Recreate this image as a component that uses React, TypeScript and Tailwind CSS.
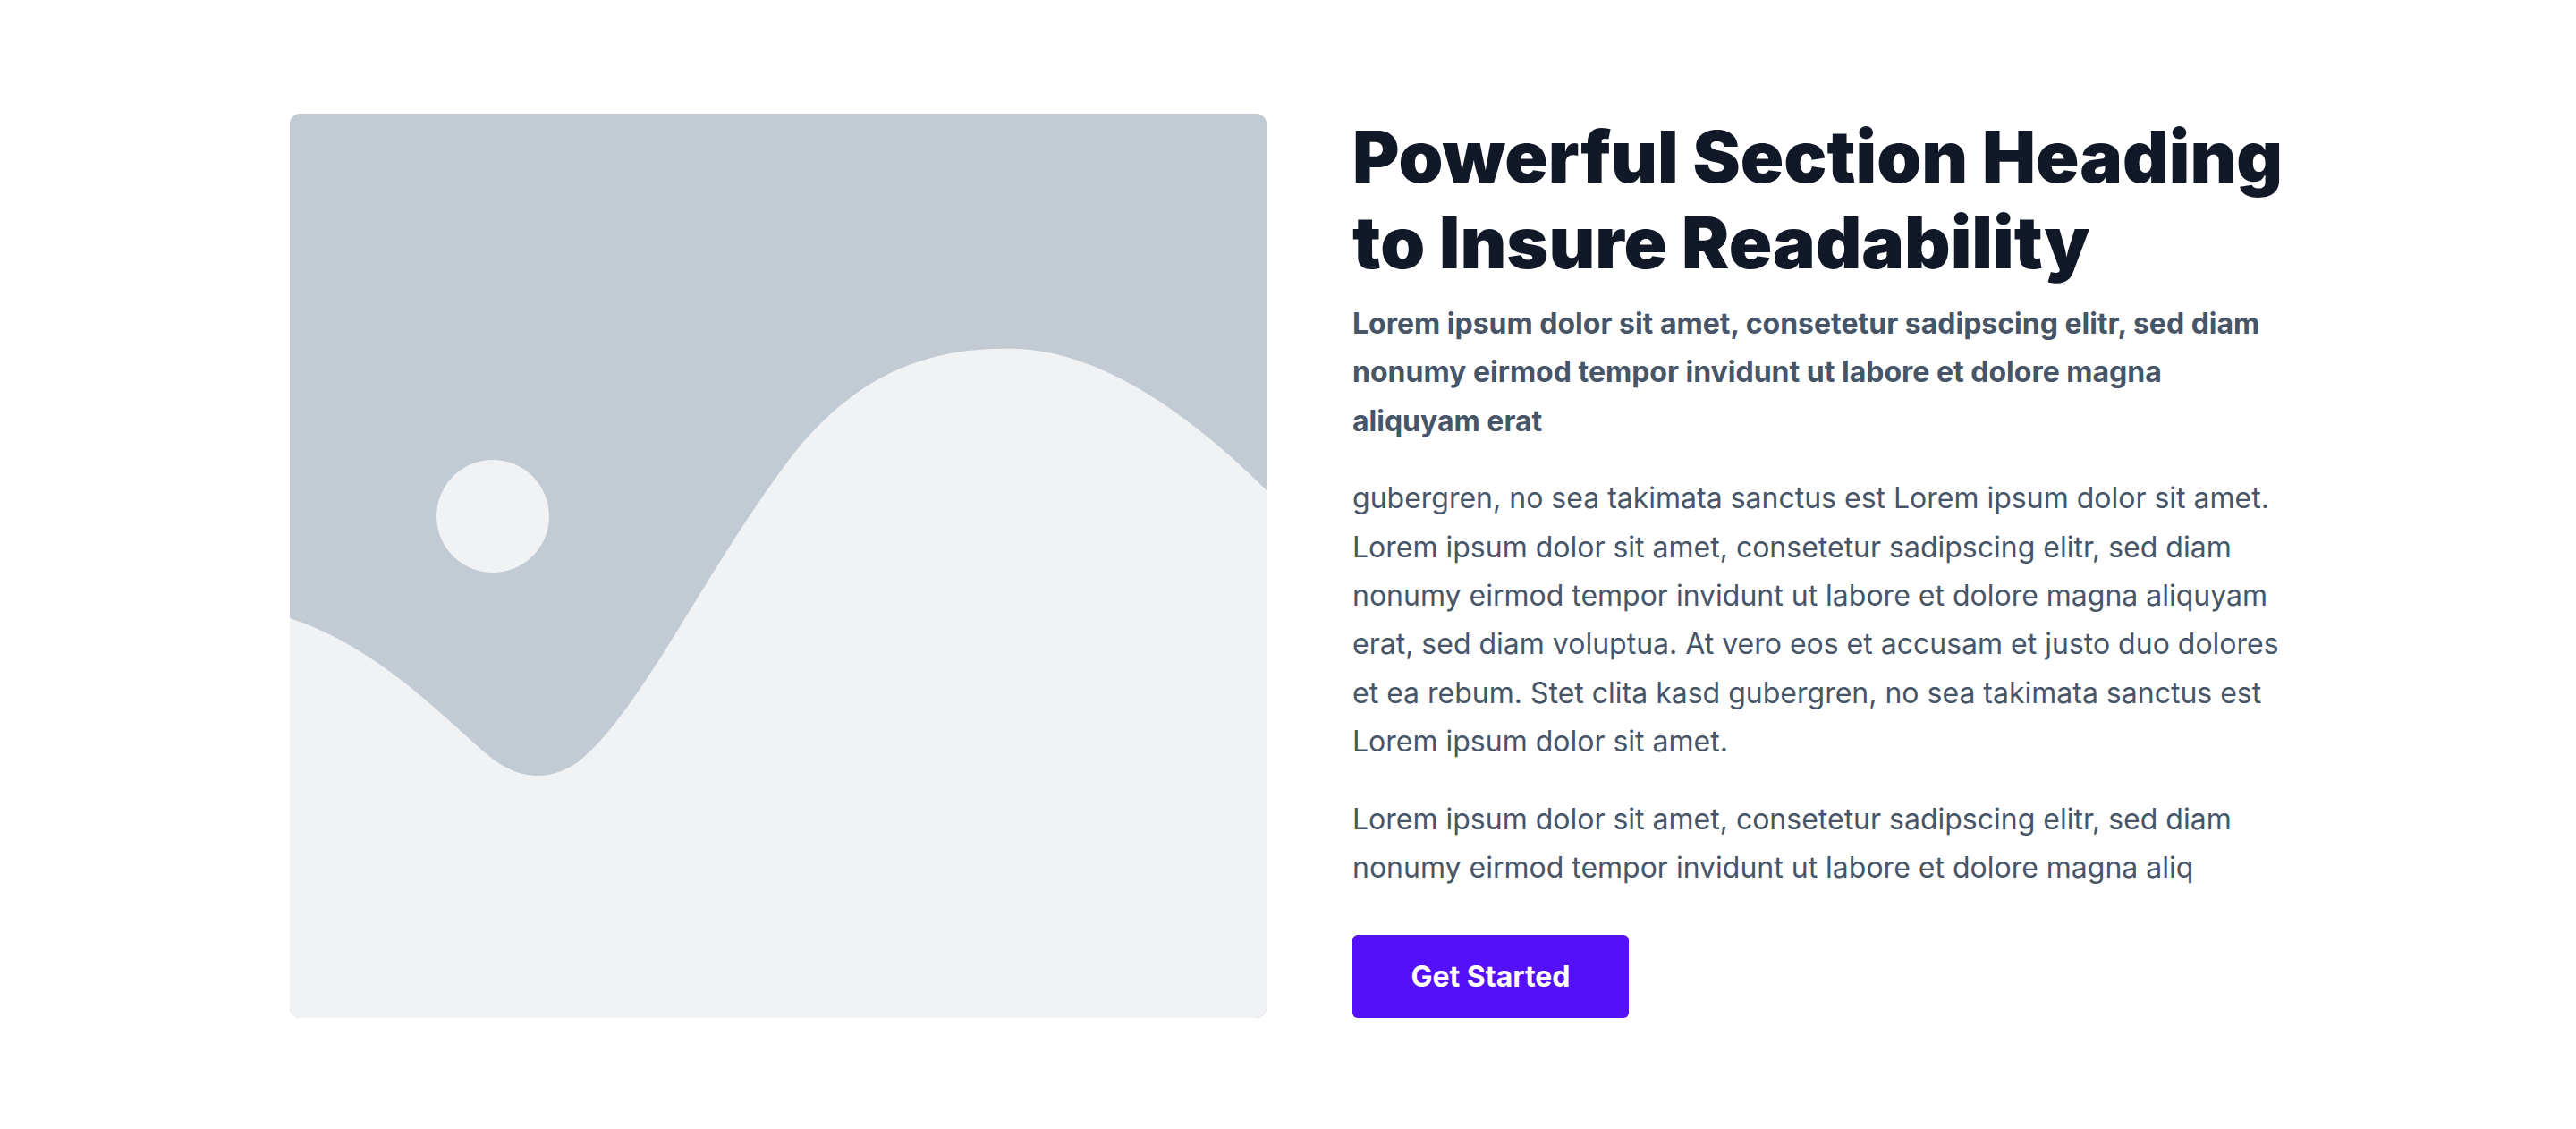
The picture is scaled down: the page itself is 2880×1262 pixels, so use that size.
import React from "react";

function Placeholder() {
  return (
    <div className="w-[1092px] h-[1011px] shrink-0 rounded-[12px] overflow-hidden bg-[#c2cad3]">
      <svg viewBox="0 0 1092 1011" width="1092" height="1011" className="block">
        <rect x="0" y="0" width="1092" height="1011" fill="#c2cad3" />
        <circle cx="227" cy="450" r="63" fill="#f0f2f4" />
        <path
          d="M0,564 C110,600 190,695 232,725 C262,745 292,745 322,725 C392,670 470,500 565,378 C645,280 730,260 815,263 C910,268 1005,335 1092,421 L1092,1011 L0,1011 Z"
          fill="#f0f2f4"
        />
      </svg>
    </div>
  );
}

export default function App() {
  return (
    <div
      className="w-full min-h-[1262px] bg-white flex justify-center items-start pt-[127px] pb-[124px] gap-[96px]"
      style={{ fontFamily: "Inter, 'Noto Sans', sans-serif" }}
    >
      <Placeholder />
      <div className="w-[1044px] shrink-0 flex flex-col items-start">
        <h1 className="text-[80px] leading-[96px] font-black text-[#111827]">
          Powerful Section Heading to Insure Readability
        </h1>
        <p className="mt-[16px] text-[32px] leading-[54.4px] font-bold text-[#475569]">
          Lorem ipsum dolor sit amet, consetetur sadipscing elitr, sed diam nonumy eirmod tempor invidunt ut labore et dolore magna aliquyam erat
        </p>
        <p className="mt-[32px] text-[32px] leading-[54.4px] font-normal text-[#475569]">
          gubergren, no sea takimata sanctus est Lorem ipsum dolor sit amet. Lorem ipsum dolor sit amet, consetetur sadipscing elitr, sed diam nonumy eirmod tempor invidunt ut labore et dolore magna aliquyam erat, sed diam voluptua. At vero eos et accusam et justo duo dolores et ea rebum. Stet clita kasd gubergren, no sea takimata sanctus est Lorem ipsum dolor sit amet.
        </p>
        <p className="mt-[32px] text-[32px] leading-[54.4px] font-normal text-[#475569]">
          Lorem ipsum dolor sit amet, consetetur sadipscing elitr, sed diam nonumy eirmod tempor invidunt ut labore et dolore magna aliq
        </p>
        <button className="mt-[48px] w-[309px] h-[93px] rounded-[6px] bg-[#5510fa] text-white text-[32px] font-bold flex items-center justify-center">
          Get Started
        </button>
      </div>
    </div>
  );
}
